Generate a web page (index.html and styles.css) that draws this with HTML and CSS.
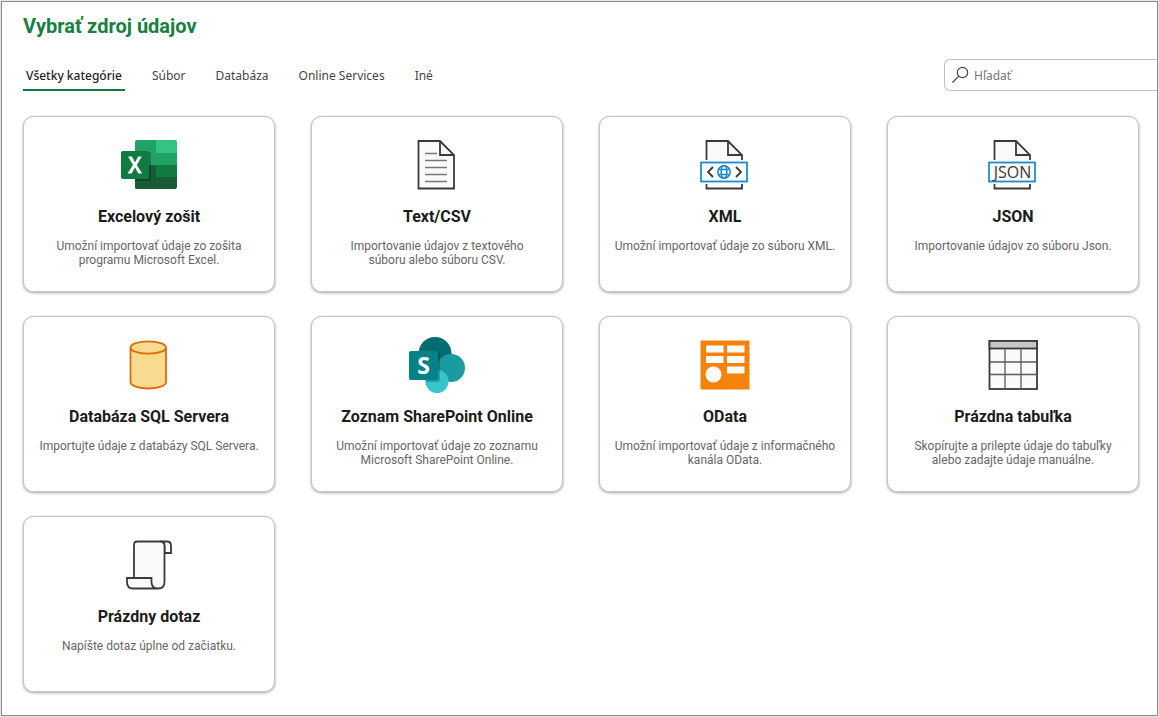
FILE: index.html
```
<!DOCTYPE html>
<html lang="sk">
<head>
  <meta charset="UTF-8" />
  <title>Vybrať zdroj údajov</title>
  <meta name="viewport" content="width=device-width, initial-scale=1" />
  <link rel="stylesheet" href="styles.css">
</head>
<body>
  <div class="dialog">
    <h1>Vybrať zdroj údajov</h1>

    <!-- Category tabs + search -->
    <div class="toolbar">
      <nav class="tabs">
        <button class="tab active">Všetky kategórie</button>
        <button class="tab">Súbor</button>
        <button class="tab">Databáza</button>
        <button class="tab">Online Services</button>
        <button class="tab">Iné</button>
      </nav>
      <label class="search">
        <svg class="search-icon" viewBox="0 0 18 18" fill="none" stroke="#444" stroke-width="1.2">
          <circle cx="10.5" cy="6.5" r="5.2" />
          <path d="M6.8 10.2L.5 16.5" />
        </svg>
        <input type="text" placeholder="Hľadať" aria-label="Hľadať" />
      </label>
    </div>

    <!-- Data source cards -->
    <main class="sources">
      <button class="card">
        <svg class="card-icon" viewBox="0 0 64 60">
          <clipPath id="book"><rect x="18" y="4" width="42" height="49" rx="2" /></clipPath>
          <g clip-path="url(#book)">
            <rect x="18" y="4" width="21" height="25" fill="#21a366" />
            <rect x="39" y="4" width="21" height="13" fill="#33c481" />
            <rect x="39" y="17" width="21" height="12" fill="#21a366" />
            <rect x="18" y="29" width="42" height="12" fill="#107c41" />
            <rect x="18" y="29" width="21" height="24" fill="#185c37" />
            <rect x="18" y="41" width="42" height="12" fill="#185c37" />
            <rect x="16" y="16" width="18" height="29" rx="2" fill="#000" opacity=".25" />
          </g>
          <rect x="4" y="15" width="28" height="28" rx="2" fill="#107c41" />
          <path d="M10.5 37.5L16 29L11 20.5H14.9L18 26.4L21.2 20.5H24.8L19.8 29L25.2 37.5H21.3L18 31.3L14.6 37.5Z" fill="#fff" />
        </svg>
        <span class="card-title">Excelový zošit</span>
        <span class="card-text">Umožní importovať údaje zo zošita programu Microsoft Excel.</span>
      </button>

      <button class="card">
        <svg class="card-icon" viewBox="0 0 64 60" fill="none" stroke="#3a3a38" stroke-width="1.8">
          <path d="M13.5 5H35L49 19V52.5H13.5Z" fill="#fafafa" />
          <path d="M35 5V19H49" />
          <path d="M20 17.5H32M20 24.5H42M20 31.5H42M20 38.5H42M20 45.5H42" stroke="#797774" stroke-width="1.5" />
        </svg>
        <span class="card-title">Text/CSV</span>
        <span class="card-text">Importovanie údajov z textového<br />súboru alebo súboru CSV.</span>
      </button>

      <button class="card">
        <svg class="card-icon" viewBox="0 0 64 60" fill="none" stroke="#3a3a38" stroke-width="1.8">
          <path d="M13.5 5H35L49 19V52.5H13.5Z" fill="#fafafa" stroke="none" />
          <path d="M13.5 24V5H35L49 19V24M35 5V19H49M13.5 48V52.5H49V48" />
          <rect x="8" y="26.5" width="46" height="19" fill="#fafafa" stroke="#1e8bcd" />
          <path d="M20 31L15 36L20 41M43 31L48 36L43 41" />
          <g stroke="#1e8bcd" stroke-width="1.5">
            <circle cx="31" cy="36" r="6.2" />
            <ellipse cx="31" cy="36" rx="2.8" ry="6.2" />
            <path d="M25.5 33.5H36.5M25.5 38.5H36.5" />
          </g>
        </svg>
        <span class="card-title">XML</span>
        <span class="card-text">Umožní importovať údaje zo súboru XML.</span>
      </button>

      <button class="card">
        <svg class="card-icon" viewBox="0 0 64 60" fill="none" stroke="#3a3a38" stroke-width="1.8">
          <path d="M13.5 5H35L49 19V52.5H13.5Z" fill="#fafafa" stroke="none" />
          <path d="M13.5 24V5H35L49 19V24M35 5V19H49M13.5 48V52.5H49V48" />
          <rect x="8" y="26.5" width="46" height="19" fill="#fafafa" stroke="#1e8bcd" />
          <text class="icon-json" x="31.5" y="41.5">JSON</text>
        </svg>
        <span class="card-title">JSON</span>
        <span class="card-text">Importovanie údajov zo súboru Json.</span>
      </button>

      <button class="card">
        <svg class="card-icon" viewBox="0 0 64 60" fill="#f8db8f" stroke="#de6c0c" stroke-width="1.8">
          <path d="M13.5 11.5V46C13.5 49.8 21.5 52.5 31.3 52.5S49 49.8 49 46V11.5" />
          <ellipse cx="31.3" cy="11.5" rx="17.7" ry="6.2" />
        </svg>
        <span class="card-title">Databáza SQL Servera</span>
        <span class="card-text">Importujte údaje z databázy SQL Servera.</span>
      </button>

      <button class="card">
        <svg class="card-icon" viewBox="0 0 64 60">
          <circle cx="30" cy="17.5" r="16.5" fill="#036c70" />
          <circle cx="46" cy="32" r="14" fill="#1a9ba1" />
          <circle cx="32" cy="45.5" r="11.5" fill="#37c6d0" />
          <path d="M16 17H33Q35 17 35 19V44Q35 46 33 46H21Q16 30 16 17Z" fill="#000" opacity=".22" />
          <rect x="4" y="15" width="29" height="29" rx="2" fill="#038387" />
          <text class="icon-letter" x="18.5" y="38">S</text>
        </svg>
        <span class="card-title">Zoznam SharePoint Online</span>
        <span class="card-text">Umožní importovať údaje zo zoznamu Microsoft SharePoint Online.</span>
      </button>

      <button class="card">
        <svg class="card-icon" viewBox="0 0 64 60" fill="#fafafa">
          <rect x="7.5" y="4.5" width="49" height="49" fill="#f5820c" />
          <rect x="13" y="9.5" width="17.5" height="7" />
          <rect x="34" y="9.5" width="17.5" height="7" />
          <rect x="13" y="20" width="17.5" height="7" />
          <rect x="34" y="20" width="17.5" height="7" />
          <rect x="34" y="30.5" width="17.5" height="7" />
          <circle cx="20.5" cy="38.5" r="8" />
        </svg>
        <span class="card-title">OData</span>
        <span class="card-text">Umožní importovať údaje z informačného kanála OData.</span>
      </button>

      <button class="card">
        <svg class="card-icon" viewBox="0 0 64 60" fill="none" stroke="#3a3a38" stroke-width="1.8">
          <rect x="8.5" y="5" width="47.5" height="48" fill="#fafafa" />
          <rect x="8.5" y="5" width="47.5" height="7.5" fill="#c8c6c4" />
          <path d="M24 12.5V53M40 12.5V53M8.5 26H56M8.5 38.5H56" stroke="#5c5a58" stroke-width="1.3" />
        </svg>
        <span class="card-title">Prázdna tabuľka</span>
        <span class="card-text">Skopírujte a prilepte údaje do tabuľky alebo zadajte údaje manuálne.</span>
      </button>

      <button class="card">
        <svg class="card-icon" viewBox="0 0 64 60" fill="#fafafa" stroke="#3a3a38" stroke-width="1.8">
          <path d="M43 5.5H50Q54 5.5 54 10V17H47.5V10Q47.5 5.5 43 5.5Z" />
          <path d="M17 42V9Q17 5.5 20.5 5.5H43Q47.5 5.5 47.5 10V46Q47.5 52.5 41 52.5H16Q10 52.5 10 46V42H34.5V46Q34.5 52.5 41 52.5" />
        </svg>
        <span class="card-title">Prázdny dotaz</span>
        <span class="card-text">Napíšte dotaz úplne od začiatku.</span>
      </button>
    </main>
  </div>
</body>
</html>
```
FILE: styles.css
```
* {
  margin: 0;
  padding: 0;
  box-sizing: border-box;
}

body {
  min-height: 100vh;
  padding: 1px;
  display: flex;
  background: #e6e6e6;
  font-family: Roboto, sans-serif;
}

button {
  font: inherit;
  background: none;
  border: none;
  cursor: pointer;
}

/* Dialog window */
.dialog {
  flex: 1;
  padding: 12px 0 0 21px;
  background: #ffffff;
  border: 1px solid #8a8a8a;
}

.dialog h1 {
  font-size: 20px;
  font-weight: 700;
  line-height: 24px;
  color: #17803f;
}

/* Tabs and search */
.toolbar {
  display: flex;
  justify-content: space-between;
  margin-top: 21px;
}

.tabs {
  display: flex;
  align-items: flex-end;
  gap: 24px;
}

.tab {
  padding: 0 3px 4px;
  border-bottom: 2px solid transparent;
  font-family: "Noto Sans", sans-serif;
  font-size: 12px;
  line-height: 18px;
  color: #444444;
}
.tab.active {
  border-bottom-color: #107c41;
  color: #222222;
  font-weight: 500;
}

.search {
  display: flex;
  align-items: center;
  gap: 4px;
  width: 213px;
  height: 32px;
  padding-left: 7px;
  border: 1px solid #c0c0c0;
  border-right: none;
  border-radius: 6px 0 0 6px;
}
.search-icon {
  width: 18px;
  height: 18px;
}
.search input {
  flex: 1;
  min-width: 0;
  border: none;
  outline: none;
  background: transparent;
  font-family: "Noto Sans", sans-serif;
  font-size: 12px;
  color: #333333;
}
.search input::placeholder {
  color: #767676;
}

/* Card grid */
.sources {
  display: grid;
  grid-template-columns: repeat(4, 1fr);
  gap: 24px 36px;
  padding: 25px 18px 20px 0;
}

.card {
  display: flex;
  flex-direction: column;
  align-items: center;
  min-height: 176px;
  padding: 19px 12px;
  background: #ffffff;
  border: 1px solid #c4c4c4;
  border-radius: 10px;
  box-shadow: 0 1px 3px rgba(0, 0, 0, 0.35);
}
.card:hover {
  background: #f5f5f5;
}

.card-icon {
  width: 64px;
  height: 60px;
}

.card-title {
  margin-top: 11px;
  font-size: 16px;
  font-weight: 700;
  line-height: 20px;
  color: #1b1b1b;
}

.card-text {
  margin-top: 12px;
  font-size: 12px;
  line-height: 14px;
  color: #666666;
}

.icon-letter {
  font: 700 23px "Noto Sans", sans-serif;
  text-anchor: middle;
  fill: #ffffff;
}
.icon-json {
  font: 400 16px "Open Sans", sans-serif;
  text-anchor: middle;
  fill: #3a3a38;
  stroke: none;
}
```
